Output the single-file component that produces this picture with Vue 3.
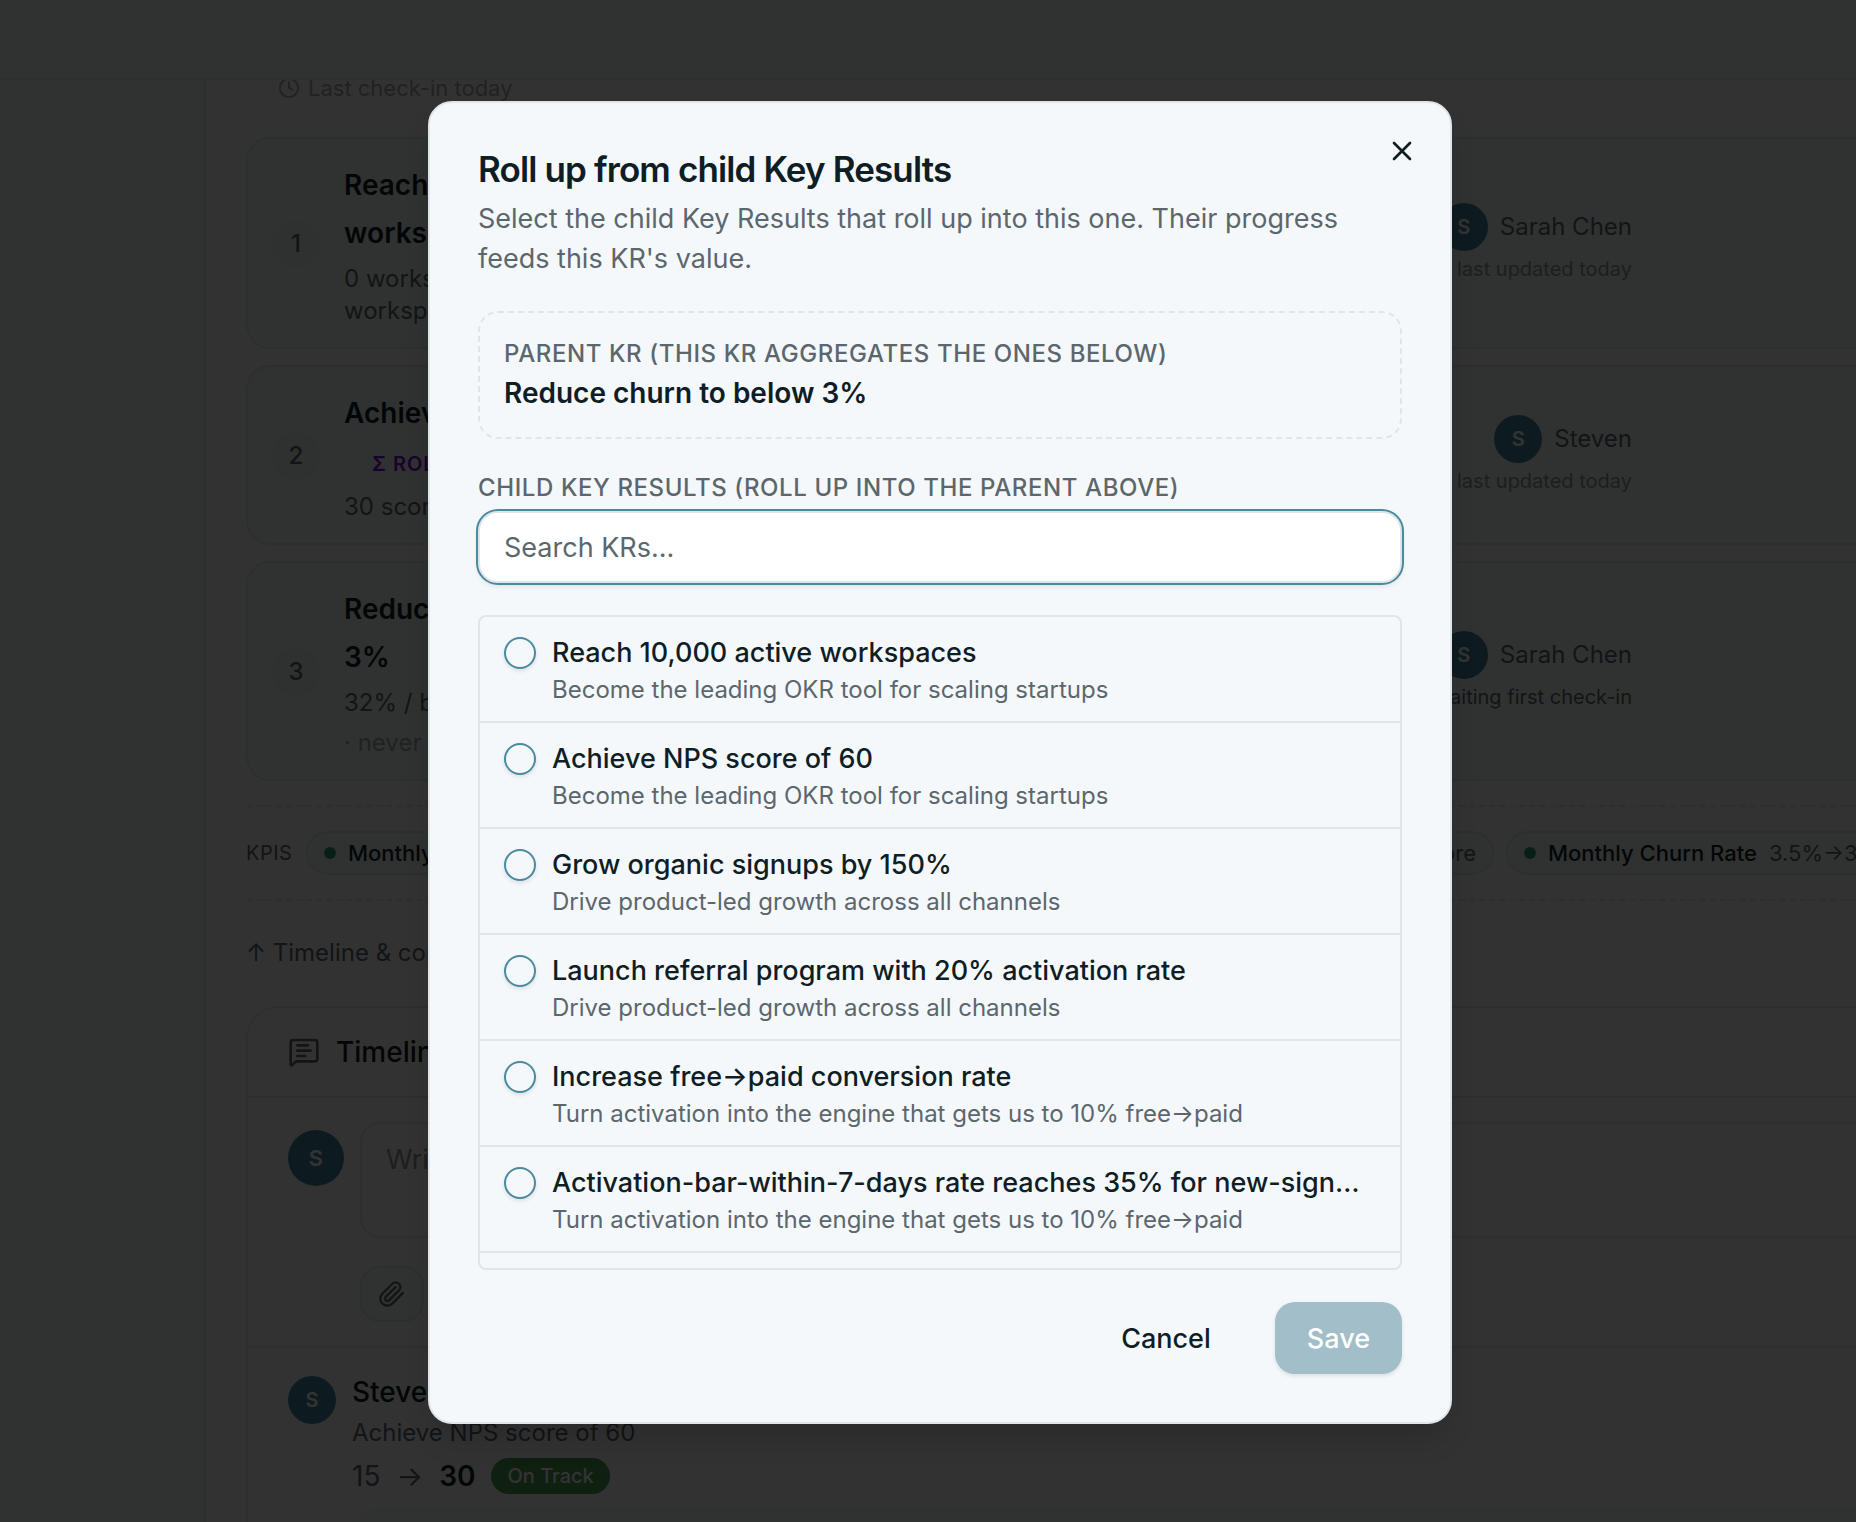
<template>
  <div class="app">
    <header class="topbar"></header>

    <div class="body">
      <aside class="sidebar"></aside>

      <main class="content">
        <p class="last-checkin">
          <svg width="22" height="22" viewBox="0 0 24 24" fill="none" stroke="currentColor" stroke-width="2" stroke-linecap="round" stroke-linejoin="round">
            <circle cx="12" cy="12" r="10" />
            <path d="M12 6v6l4 2" />
          </svg>
          Last check-in today
        </p>

        <ol class="kr-list">
          <li v-for="(kr, index) in keyResults" :key="index" class="kr-card">
            <span class="kr-number">{{ index + 1 }}</span>
            <div class="kr-main">
              <h3 v-for="line in kr.title" :key="line">{{ line }}</h3>
              <span v-if="kr.rollup" class="kr-badge">Σ ROLL-UP</span>
              <p class="kr-values">
                <span v-for="line in kr.values" :key="line">{{ line }}</span>
              </p>
              <p v-if="kr.note" class="kr-note">{{ kr.note }}</p>
            </div>
            <div class="kr-owner">
              <div class="owner-name">
                <span class="avatar">S</span>
                {{ kr.owner }}
              </div>
              <p :class="{ waiting: kr.waiting }">{{ kr.status }}</p>
            </div>
          </li>
        </ol>

        <section class="kpis">
          <span class="kpis-label">KPIS</span>
          <span class="pill pill-wide"><i class="dot"></i><b>Monthly</b></span>
          <span class="pill pill-wide pill-end">score</span>
          <span class="pill"><i class="dot"></i><b>Monthly Churn Rate</b>3.5%→3%</span>
        </section>

        <a href="#timeline" class="timeline-link">↑ Timeline &amp; comments</a>

        <section id="timeline" class="timeline">
          <h2>
            <svg width="32" height="32" viewBox="0 0 24 24" fill="none" stroke="currentColor" stroke-width="2" stroke-linecap="round" stroke-linejoin="round">
              <path d="M22 17a2 2 0 0 1-2 2H6.828a2 2 0 0 0-1.414.586l-2.202 2.202A.71.71 0 0 1 2 21.286V5a2 2 0 0 1 2-2h16a2 2 0 0 1 2 2z" />
              <path d="M7 7h8M7 11h10M7 15h6" />
            </svg>
            Timeline
          </h2>

          <div class="composer">
            <span class="avatar avatar-large">S</span>
            <div class="composer-main">
              <textarea aria-label="Comment" placeholder="Write a comment"></textarea>
              <button type="button" class="attach" aria-label="Attach a file">
                <svg width="28" height="28" viewBox="0 0 24 24" fill="none" stroke="currentColor" stroke-width="2" stroke-linecap="round" stroke-linejoin="round">
                  <path d="m21.44 11.05-9.19 9.19a6 6 0 0 1-8.49-8.49l8.57-8.57A4 4 0 1 1 18 8.84l-8.59 8.57a2 2 0 0 1-2.83-2.83l8.49-8.48" />
                </svg>
              </button>
            </div>
          </div>

          <article class="entry">
            <span class="avatar">S</span>
            <div class="entry-main">
              <h3>Steven</h3>
              <p class="entry-kr">Achieve NPS score of 60</p>
              <p class="entry-change">
                <span>15</span>
                <span class="arrow">→</span>
                <strong>30</strong>
                <em>On Track</em>
              </p>
              <div class="entry-note"></div>
            </div>
          </article>
        </section>
      </main>
    </div>

    <div class="overlay">
      <form class="modal" role="dialog" aria-modal="true" aria-labelledby="modal-title" @submit.prevent>
        <button type="button" class="close" aria-label="Close">
          <svg width="32" height="32" viewBox="0 0 24 24" fill="none" stroke="currentColor" stroke-width="2" stroke-linecap="round">
            <path d="M18 6 6 18M6 6l12 12" />
          </svg>
        </button>

        <h1 id="modal-title">Roll up from child Key Results</h1>
        <p class="description">
          Select the child Key Results that roll up into this one. Their progress feeds this KR's value.
        </p>

        <div class="parent">
          <p class="label">Parent KR (this KR aggregates the ones below)</p>
          <p class="parent-name">Reduce churn to below 3%</p>
        </div>

        <label class="label" for="kr-search">Child Key Results (roll up into the parent above)</label>
        <input id="kr-search" v-model="search" class="search" type="text" placeholder="Search KRs..." />

        <ul class="options">
          <li v-for="option in filteredOptions" :key="option.id">
            <label class="option">
              <input v-model="selected" type="checkbox" :value="option.id" />
              <span class="option-text">
                <span class="option-title">{{ option.title }}</span>
                <span class="option-objective">{{ option.objective }}</span>
              </span>
            </label>
          </li>
        </ul>

        <footer class="actions">
          <button type="button" class="cancel">Cancel</button>
          <button type="submit" class="save" :disabled="!selected.length">Save</button>
        </footer>
      </form>
    </div>
  </div>
</template>

<script setup>
import { ref, computed } from 'vue'

const search = ref('')
const selected = ref([])

const keyResults = [
  {
    title: ['Reach 10,000', 'workspaces'],
    values: ['0 workspaces', 'workspaces'],
    owner: 'Sarah Chen',
    status: 'last updated today'
  },
  {
    title: ['Achieve NPS'],
    rollup: true,
    values: ['30 score'],
    owner: 'Steven',
    status: 'last updated today'
  },
  {
    title: ['Reduce churn', '3%'],
    values: ['32% / below'],
    note: '· never',
    owner: 'Sarah Chen',
    status: 'awaiting first check-in',
    waiting: true
  }
]

const options = [
  { id: 1, title: 'Reach 10,000 active workspaces', objective: 'Become the leading OKR tool for scaling startups' },
  { id: 2, title: 'Achieve NPS score of 60', objective: 'Become the leading OKR tool for scaling startups' },
  { id: 3, title: 'Grow organic signups by 150%', objective: 'Drive product-led growth across all channels' },
  { id: 4, title: 'Launch referral program with 20% activation rate', objective: 'Drive product-led growth across all channels' },
  { id: 5, title: 'Increase free→paid conversion rate', objective: 'Turn activation into the engine that gets us to 10% free→paid' },
  { id: 6, title: 'Activation-bar-within-7-days rate reaches 35% for new-sign…', objective: 'Turn activation into the engine that gets us to 10% free→paid' }
]

const filteredOptions = computed(() =>
  options.filter((option) => option.title.toLowerCase().includes(search.value.toLowerCase()))
)
</script>

<style>
body {
  margin: 0;
}
</style>

<style scoped>
.app {
  height: 100vh;
  overflow: hidden;
  display: flex;
  flex-direction: column;
  background: #fdfbfb;
  color: #0f1e25;
  font-family: Inter, "Liberation Sans", sans-serif;
  font-size: 24px;
  line-height: 32px;
}

.app * {
  box-sizing: border-box;
}

h1, h2, h3, p, ol, ul {
  margin: 0;
  padding: 0;
  list-style: none;
}

button, input, textarea {
  font-family: inherit;
  font-size: 27px;
  color: inherit;
}

/* page behind the dialog */
.topbar {
  flex: none;
  height: 80px;
  background: #f1f8f5;
  border-bottom: 2px solid #dfe6e9;
}

.body {
  flex: 1;
  min-height: 0;
  display: flex;
}

.sidebar {
  flex: none;
  width: 206px;
  background: #f1f8f5;
  border-right: 2px solid #dfe6e9;
}

.content {
  flex: 1;
  min-width: 0;
  overflow: hidden;
  padding-left: 40px;
}

.last-checkin {
  display: flex;
  align-items: center;
  gap: 8px;
  margin: -8px 0 33px 32px;
  color: #a0a8ac;
  font-size: 22px;
}

.kr-list {
  display: flex;
  flex-direction: column;
  gap: 16px;
}

.kr-card {
  display: flex;
  align-items: center;
  gap: 24px;
  padding: 22px 224px 20px 24px;
  background: #f1f8f5;
  border: 2px solid #dfe6e9;
  border-right: 0;
  border-radius: 24px 0 0 24px;
}

.kr-number {
  flex: none;
  width: 48px;
  line-height: 48px;
  border-radius: 50%;
  background: #ebf0ef;
  color: #5b676d;
  font-weight: 500;
  text-align: center;
}

.kr-main h3 {
  font-size: 28px;
  font-weight: 600;
  line-height: 48px;
}

.kr-badge {
  display: block;
  padding: 7px 0 1px 28px;
  color: #8010d0;
  font-size: 20px;
  font-weight: 600;
  line-height: 40px;
  letter-spacing: 0.05em;
}

.kr-values {
  margin-top: 6px;
  color: #5b676d;
}

.kr-values span {
  display: block;
}

.kr-note {
  margin-top: 8px;
  color: #a0a8ac;
}

.kr-owner {
  margin-left: auto;
  padding-bottom: 2px;
  text-align: right;
}

.kr-owner p {
  margin-top: 4px;
  color: #8d969a;
  font-size: 20px;
  line-height: 28px;
}

.kr-owner .waiting {
  color: #5b676d;
}

.owner-name {
  display: flex;
  justify-content: flex-end;
  align-items: center;
  gap: 12px;
  color: #5b676d;
}

.avatar {
  flex: none;
  width: 48px;
  border-radius: 50%;
  background: #43879f;
  color: #fff;
  font-size: 20px;
  font-weight: 600;
  line-height: 48px;
  text-align: center;
}

.avatar-large {
  width: 56px;
  font-size: 22px;
  line-height: 56px;
}

.kpis {
  display: flex;
  align-items: center;
  gap: 12px;
  margin: 24px 0 36px;
  padding: 24px 0;
  border-top: 2px dashed #dfe6e9;
  border-bottom: 2px dashed #dfe6e9;
  overflow: hidden;
}

.kpis-label {
  flex: none;
  width: 48px;
  color: #5b676d;
  font-size: 20px;
  letter-spacing: 0.025em;
}

.pill {
  flex: none;
  display: flex;
  align-items: center;
  gap: 12px;
  padding: 4px 16px;
  background: #f1f8f5;
  border: 2px solid #dfe6e9;
  border-radius: 24px;
  color: #5b676d;
  font-size: 22px;
}

.pill b {
  color: #0f1e25;
  font-weight: 500;
}

.pill-wide {
  width: 588px;
}

.pill-end {
  justify-content: flex-end;
}

.dot {
  width: 12px;
  height: 12px;
  border-radius: 50%;
  background: #2c9b68;
}

.timeline-link {
  display: block;
  color: #5b676d;
  text-decoration: none;
}

.timeline {
  margin-top: 37px;
  border: 2px solid #dfe6e9;
  border-right: 0;
  border-radius: 32px 0 0 0;
}

.timeline h2 {
  display: flex;
  align-items: center;
  gap: 16px;
  padding: 24px 40px;
  border-bottom: 2px solid #dfe6e9;
  font-size: 28px;
  font-weight: 500;
  line-height: 40px;
}

.timeline h2 svg {
  color: #5b676d;
}

.composer {
  display: flex;
  gap: 16px;
  padding: 24px 0 24px 40px;
  border-bottom: 2px solid #dfe6e9;
}

.composer .avatar {
  margin-top: 8px;
  align-self: flex-start;
}

.composer-main {
  flex: 1;
  display: flex;
  flex-direction: column;
  align-items: flex-start;
  gap: 28px;
}

textarea {
  display: block;
  width: 100%;
  height: 116px;
  padding: 16px 24px;
  background: transparent;
  border: 2px solid #dfe6e9;
  border-right: 0;
  border-radius: 20px 0 0 20px;
  line-height: 40px;
  resize: none;
}

textarea::placeholder {
  color: #8d969a;
}

.attach {
  display: flex;
  align-items: center;
  justify-content: center;
  width: 64px;
  height: 56px;
  padding: 0;
  background: #f1f8f5;
  border: 2px solid #dfe6e9;
  border-radius: 20px;
  color: #5b676d;
}

.entry {
  display: flex;
  gap: 16px;
  padding: 24px 0 0 40px;
}

.entry .avatar {
  margin-top: 4px;
  align-self: flex-start;
}

.entry-main {
  flex: 1;
}

.entry h3 {
  font-size: 28px;
  font-weight: 500;
  line-height: 40px;
}

.entry-kr {
  margin: 5px 0 7px;
  color: #5b676d;
}

.entry-change {
  display: flex;
  align-items: center;
  gap: 16px;
  color: #5b676d;
  font-size: 28px;
  line-height: 40px;
}

.entry-change strong {
  color: #0f1e25;
  font-weight: 600;
}

.entry-change em {
  padding: 0 16px;
  background: #4a9b52;
  border-radius: 18px;
  color: #fff;
  font-size: 20px;
  font-style: normal;
  font-weight: 500;
  line-height: 36px;
}

.entry-note {
  height: 80px;
  margin-top: 12px;
  background: #f1f8f5;
  border-radius: 20px 0 0 20px;
}

/* dialog */
.overlay {
  position: absolute;
  inset: 0;
  display: flex;
  align-items: center;
  justify-content: center;
  padding: 3px 0 0 24px;
  box-sizing: border-box;
  background: rgba(0, 0, 0, 0.8);
}

.modal {
  position: relative;
  width: 1024px;
  padding: 48px;
  background: #f5f8fb;
  border: 2px solid #dfe6e9;
  border-radius: 24px;
  box-shadow: 0 20px 30px -6px rgba(0, 0, 0, 0.15);
}

.close {
  position: absolute;
  top: 32px;
  right: 32px;
  display: flex;
  padding: 0;
  background: none;
  border: 0;
}

h1 {
  font-size: 35px;
  font-weight: 600;
  line-height: 36px;
  letter-spacing: -0.025em;
}

.description {
  margin-top: 12px;
  color: #5b676d;
  font-size: 27px;
  line-height: 40px;
}

.parent {
  margin: 32px 0;
  padding: 24px;
  border: 2px dashed #dfe6e9;
  border-radius: 20px;
}

.label {
  display: block;
  padding-top: 1px;
  color: #5b676d;
  font-weight: 500;
  letter-spacing: 0.025em;
  text-transform: uppercase;
}

.parent-name {
  margin-top: 3px;
  font-size: 28px;
  font-weight: 600;
  line-height: 40px;
}

.search {
  display: block;
  width: 100%;
  height: 72px;
  margin-top: 7px;
  padding: 0 24px;
  background: #fff;
  border: 2px solid #dfe6e9;
  border-radius: 20px;
  outline: none;
  box-shadow: 0 0 0 2px #4a8a9f, 0 3px 5px 1px rgba(0, 0, 0, 0.08);
}

.search::placeholder {
  color: #5b676d;
  opacity: 1;
}

.options {
  margin-top: 32px;
  padding-bottom: 15px;
  border: 2px solid #dfe6e9;
  border-radius: 8px;
}

.option {
  display: flex;
  align-items: flex-start;
  gap: 16px;
  padding: 16px 24px 15px;
  border-bottom: 2px solid #dfe6e9;
}

.option input {
  appearance: none;
  flex: none;
  width: 32px;
  height: 32px;
  margin: 4px 0 0;
  border: 2px solid #4a8a9f;
  border-radius: 50%;
  box-shadow: 0 2px 4px rgba(0, 0, 0, 0.1);
}

.option input:checked {
  background: #4a8a9f;
}

.option-text {
  flex: 1;
  min-width: 0;
}

.option-title,
.option-objective {
  display: block;
  overflow: hidden;
  text-overflow: ellipsis;
  white-space: nowrap;
}

.option-title {
  font-size: 27px;
  font-weight: 500;
  line-height: 40px;
}

.option-objective {
  margin-top: 1px;
  color: #5b676d;
}

.actions {
  display: flex;
  justify-content: flex-end;
  gap: 32px;
  margin-top: 32px;
}

.actions button {
  height: 72px;
  padding: 0 32px;
  background: none;
  border: 0;
  border-radius: 20px;
  font-weight: 500;
}

.actions .save {
  background: #4a8a9f;
  color: #fff;
  box-shadow: 0 2px 4px rgba(0, 0, 0, 0.1);
}

.actions .save:disabled {
  background: #a1bec9;
}
</style>
